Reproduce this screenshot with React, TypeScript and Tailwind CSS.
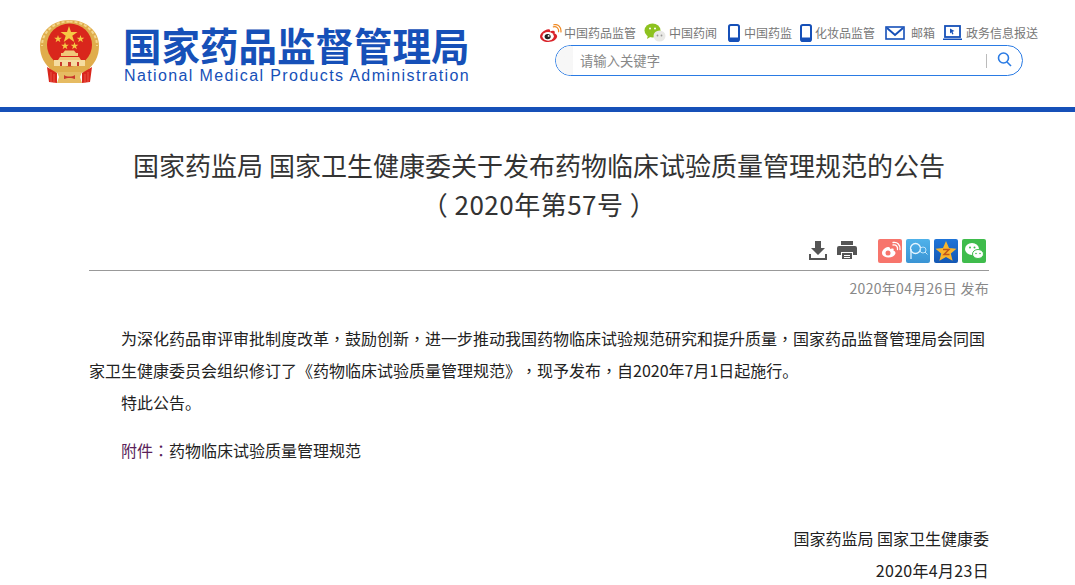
const cjk = "font-['Noto_Sans_CJK_SC','Noto_Sans',sans-serif]";

// centred full-width punctuation, the SC font sets it in the corner
function Mark({ children }: { children: string }) {
  return <span className="font-['Noto_Sans_CJK_TC',sans-serif]">{children}</span>;
}

function Emblem() {
  return (
    <svg width="60" height="64" viewBox="0 0 60 64">
      <path d="M29.500 0C13 0 0 11 0 26c0 11 5 19 12 24h35c7-5 12-13 12-24C59 11 46 0 29.500 0z" fill="#e0ad4c" />
      <path d="M29.500 1.500C14 1.500 2 12 2 26" fill="none" stroke="#f4d78e" strokeWidth="2" strokeDasharray="3 2" />
      <path d="M29.500 1.500C45 1.500 57 12 57 26" fill="none" stroke="#f4d78e" strokeWidth="2" strokeDasharray="3 2" />
      <ellipse cx="29.500" cy="25" rx="22.500" ry="21.500" fill="#d9261c" />
      <path d="M29 6l2 6h6.500l-5.200 3.800 2 6.200-5.300-3.800-5.300 3.800 2-6.200L20.500 12H27z" fill="#f6c945" />
      <path d="M18 15l.9 2.700h2.900l-2.300 1.700.9 2.800-2.400-1.700-2.400 1.700.9-2.800-2.300-1.700h2.900z" fill="#f6c945" />
      <path d="M40.500 15l.9 2.700h2.900l-2.300 1.700.9 2.800-2.400-1.700-2.400 1.700.9-2.800-2.300-1.700h2.900z" fill="#f6c945" />
      <path d="M25 22l.9 2.700h2.900l-2.300 1.700.9 2.800-2.400-1.700-2.400 1.700.9-2.800-2.300-1.700h2.900z" fill="#f6c945" />
      <path d="M34.500 22l.9 2.700h2.900l-2.300 1.700.9 2.800-2.400-1.700-2.400 1.700.9-2.800-2.300-1.700h2.900z" fill="#f6c945" />
      <path d="M23 33l2-2.500h9l2 2.500zM21 36v-3h17v3zM18 40l2-3h19l2 3z" fill="#f0c979" />
      <path d="M14 40h31v6H14z" fill="#f5dca0" />
      <path d="M20 42h2v4h-2zM28 42h3v4h-3zM37 42h2v4h-2z" fill="#c9392d" />
      <path d="M7 43c6 4 13 6 22.500 6S46 47 52 43l-4 8c-5 2-11 3-18.500 3S16 53 11 51z" fill="#e0ad4c" />
      <path d="M7 47l10 6v10l-8-1zM52 47l-10 6v10l8-1z" fill="#d9261c" />
      <path d="M11 52v10M14 54v9M48 52v10M45 54v9" stroke="#f06a5a" strokeWidth=".7" />
      <path d="M17 52h25l-2 5 2 6H17l2-6z" fill="#e6bb62" />
      <path d="M24 55c3 2 8 2 11 0v4c-3-1.500-8-1.500-11 0z" fill="#c9392d" />
    </svg>
  );
}

function Weibo({ className }: { className: string }) {
  return (
    <svg className={className} viewBox="0 0 24 20">
      <path d="M10 5.500C5 6 1 9.800 1 13.200 1 16.800 5 19 9.500 19c5.500 0 9.500-3 9.500-6 0-2-2-2.700-2.700-3 .6-1.500.4-2.800-1.500-3-1.200-.1-2.300.4-3.300.8.300-1.600-.2-2.700-1.500-2.300z" fill="#d9232a" />
      <ellipse cx="9.500" cy="13" rx="6" ry="4.500" fill="#fff" />
      <ellipse cx="9" cy="13.200" rx="3.200" ry="2.800" fill="#222" />
      <circle cx="10" cy="12.500" r="1" fill="#fff" />
      <path d="M15 3c3-1 6 1.500 5.500 5M15.500 .8c4.500-1 8 2.500 7.500 7.500" fill="none" stroke="#f08a24" strokeWidth="1.300" strokeLinecap="round" />
    </svg>
  );
}

function Wechat({ className }: { className: string }) {
  return (
    <svg className={className} viewBox="0 0 22 20">
      <ellipse cx="8.500" cy="7.500" rx="8" ry="7" fill="#8dc21f" />
      <path d="M4 12l-1 4 4-2.500z" fill="#8dc21f" />
      <circle cx="6" cy="5.500" r="1" fill="#fff" />
      <circle cx="11" cy="5.500" r="1" fill="#fff" />
      <ellipse cx="15.500" cy="13" rx="6" ry="5.500" fill="#e9e9e6" />
      <circle cx="13.500" cy="12.500" r=".9" fill="#999" />
      <circle cx="17.500" cy="12.500" r=".9" fill="#999" />
    </svg>
  );
}

function Phone() {
  return (
    <svg className="h-[18px] w-3" viewBox="0 0 12 18">
      <rect x="1" y="1" width="10" height="16" rx="1.800" fill="#fff" stroke="#1650b8" strokeWidth="2" />
      <rect x="1" y="13.500" width="10" height="3.500" fill="#1650b8" />
    </svg>
  );
}

function Mail() {
  return (
    <svg className="h-[14px] w-5" viewBox="0 0 20 14">
      <rect x="1" y="1" width="18" height="12" fill="#fff" stroke="#1650b8" strokeWidth="1.600" />
      <path d="M2 2l8 7 8-7" fill="none" stroke="#1650b8" strokeWidth="2" />
    </svg>
  );
}

function Monitor() {
  return (
    <svg className="h-4 w-[19px]" viewBox="0 0 19 16">
      <rect x="2" y="1" width="15" height="11" fill="#fff" stroke="#1650b8" strokeWidth="1.800" />
      <path d="M0 13.500h19V15H0z" fill="#1650b8" />
      <path d="M7 3.500l4.500 2.500-2 .8 1 2.200-1.200.5-1-2.200-1.300 1.200z" fill="#1650b8" />
    </svg>
  );
}

function TopLink({ icon, label, gap }: { icon: React.ReactNode; label: string; gap: string }) {
  return (
    <a className={`flex items-center ${gap}`}>
      {icon}
      <span className="text-[12px] leading-4 text-[#777]">{label}</span>
    </a>
  );
}

function ShareIcon({ bg, children }: { bg: string; children: React.ReactNode }) {
  return (
    <span className={`flex h-6 w-6 items-center justify-center rounded-[2px] ${bg}`}>
      <svg className="h-6 w-6" viewBox="0 0 24 24">{children}</svg>
    </span>
  );
}

export default function App() {
  return (
    <div className={`min-h-[585px] overflow-hidden bg-white [text-spacing-trim:space-all] ${cjk}`}>
      {/* Header */}
      <header className="flex h-[112px] border-b-[5px] border-[#1650b8] pl-[40px] pr-[36px]">
        <div className="mt-[20px]">
          <Emblem />
        </div>
        <div className="ml-[23px] mt-[21px] w-[345px]">
          <div className="whitespace-nowrap text-[38.500px] font-bold leading-[46px] text-[#1650b8]">国家药品监督管理局</div>
          <div className="whitespace-nowrap pl-[1px] font-['Liberation_Sans',sans-serif] text-[16px] leading-[18px] tracking-[1.38px] text-[#1650b8]">
            National Medical Products Administration
          </div>
        </div>
        <div className="ml-[71px] flex flex-1 flex-col">
          <div className="mt-[23px] flex h-5 items-center">
            <TopLink gap="gap-[2px]" icon={<Weibo className="h-[19px] w-[23px]" />} label="中国药品监管" />
            <div className="ml-2">
              <TopLink gap="gap-[3px]" icon={<Wechat className="h-5 w-[22px]" />} label="中国药闻" />
            </div>
            <div className="ml-[11px]">
              <TopLink gap="gap-1" icon={<Phone />} label="中国药监" />
            </div>
            <div className="ml-2">
              <TopLink gap="gap-[3px]" icon={<Phone />} label="化妆品监管" />
            </div>
            <div className="ml-[10px]">
              <TopLink gap="gap-[6px]" icon={<Mail />} label="邮箱" />
            </div>
            <div className="ml-2">
              <TopLink gap="gap-1" icon={<Monitor />} label="政务信息报送" />
            </div>
          </div>
          <div className="ml-4 mt-[2px] flex h-[31px] w-[468px] items-center overflow-hidden rounded-full border border-[#2a7be4]">
            <div className="flex h-full w-[430px] items-center bg-gradient-to-r from-[#f7f7f7] from-[4%] to-white to-[4%] pl-[24px] text-[13.330px] text-[#888]">
              请输入关键字
            </div>
            <div className="h-[14px] w-px bg-[#bbb]" />
            <div className="flex h-full flex-1 items-start justify-center pt-[6px]">
              <svg className="h-[15px] w-[15px]" viewBox="0 0 15 15" fill="none" stroke="#2a7be4" strokeWidth="1.600">
                <circle cx="6.500" cy="6" r="5" />
                <path d="M10 10l4 4" />
              </svg>
            </div>
          </div>
        </div>
      </header>

      <main className="ml-[89px] w-[900px]">
        <h1 className="mt-[33px] text-center text-[26px] font-normal leading-[39px] text-[#333]">
          国家药监局 国家卫生健康委关于发布药物临床试验质量管理规范的公告
          <br />
          <span className="tracking-[0.5px]">（ 2020年第57号 ）</span>
        </h1>

        {/* Tools */}
        <div className="mt-[16px] flex h-[32px] items-start justify-end border-b border-[#999] pr-[3px]">
          <svg className="mt-[1px] h-5 w-[18px]" viewBox="0 0 18 20" fill="#555">
            <path d="M6 1h6v7h4l-7 7-7-7h4z" />
            <path d="M0 14h2v4h14v-4h2v6H0z" />
          </svg>
          <svg className="ml-[10px] mt-[1px] h-5 w-5" viewBox="0 0 20 20" fill="#555">
            <path d="M4 1h12v4H4z" />
            <path d="M2 6h16a2 2 0 012 2v7h-4v-3H4v3H0V8a2 2 0 012-2z" />
            <path d="M5 13h10v6H5z" />
            <path d="M7 15h6v1H7zM7 17h6v1H7z" fill="#fff" />
          </svg>
          <div className="ml-[21px] flex gap-1">
            <ShareIcon bg="bg-[#f7756c]">
              <path d="M10 8C6.500 8.500 4 11.500 4 14c0 2.700 3 4.500 6.500 4.500 4 0 7-2.200 7-4.500 0-1.500-1.300-2-2-2.200.5-1.300.2-2.200-1-2.300-1-.1-2 .3-2.500.6.200-1.200-.3-2.400-2-2.100z" fill="#fff" />
              <circle cx="10" cy="14" r="2.500" fill="#f7756c" />
              <path d="M15 6c3-.5 5 1.500 4.500 4.500M15 3.500c4.500-.8 7.500 2.500 7 7" fill="none" stroke="#fff" strokeWidth="1.300" strokeLinecap="round" />
            </ShareIcon>
            <ShareIcon bg="bg-gradient-to-b from-[#4fb2ea] to-[#3a94d4]">
              <circle cx="9.500" cy="9.500" r="5" fill="none" stroke="#e6f5ff" strokeWidth="1.300" />
              <path d="M5 10v10" stroke="#e6f5ff" strokeWidth="1.300" />
              <circle cx="17" cy="11" r="3" fill="none" stroke="#bfe4fa" />
              <path d="M19 13l2.500 2.500" stroke="#bfe4fa" />
            </ShareIcon>
            <ShareIcon bg="bg-gradient-to-b from-[#1f74d8] to-[#1458b4]">
              <path d="M12 2l3 7 7.500.7-5.700 4.800 1.800 7.300L12 18l-6.600 3.800 1.800-7.300L1.500 9.700 9 9z" fill="#f8b62d" />
              <path d="M9 10.500h6l-5 5h5.500" fill="none" stroke="#c2571a" strokeWidth="1.500" />
            </ShareIcon>
            <ShareIcon bg="bg-[#3fbc4c]">
              <ellipse cx="10" cy="10" rx="7" ry="6" fill="#fff" />
              <ellipse cx="16" cy="15" rx="5.500" ry="4.500" fill="#fff" stroke="#3fbc4c" />
              <circle cx="8" cy="8.500" r="1" fill="#3fbc4c" />
              <circle cx="12.500" cy="8.500" r="1" fill="#3fbc4c" />
              <circle cx="14" cy="14.500" r=".8" fill="#3fbc4c" />
              <circle cx="18" cy="14.500" r=".8" fill="#3fbc4c" />
            </ShareIcon>
          </div>
        </div>
        <div className="mt-[7px] text-right text-[14px] leading-5 tracking-[0.3px] text-[#888]">2020年04月26日 发布</div>

        {/* Body */}
        <article className="mt-[24px] text-[16px] leading-[32px] text-[#222]">
          <p className="indent-8">
            为深化药品审评审批制度改革<Mark>，</Mark>鼓励创新<Mark>，</Mark>进一步推动我国药物临床试验规范研究和提升质量<Mark>，</Mark>国家药品监督管理局会同国家卫生健康委员会组织修订了《药物临床试验质量管理规范》<Mark>，</Mark>现予发布<Mark>，</Mark>自2020年7月1日起施行。
          </p>
          <p className="indent-8">特此公告。</p>
          <p className="mt-[16px] indent-8">
            <span className="text-[#5a1f5a]">附件<Mark>：</Mark></span>药物临床试验质量管理规范
          </p>
          <p className="mt-[56px] text-right">国家药监局 国家卫生健康委</p>
          <p className="text-right tracking-[0.3px]">2020年4月23日</p>
        </article>
      </main>
    </div>
  );
}
